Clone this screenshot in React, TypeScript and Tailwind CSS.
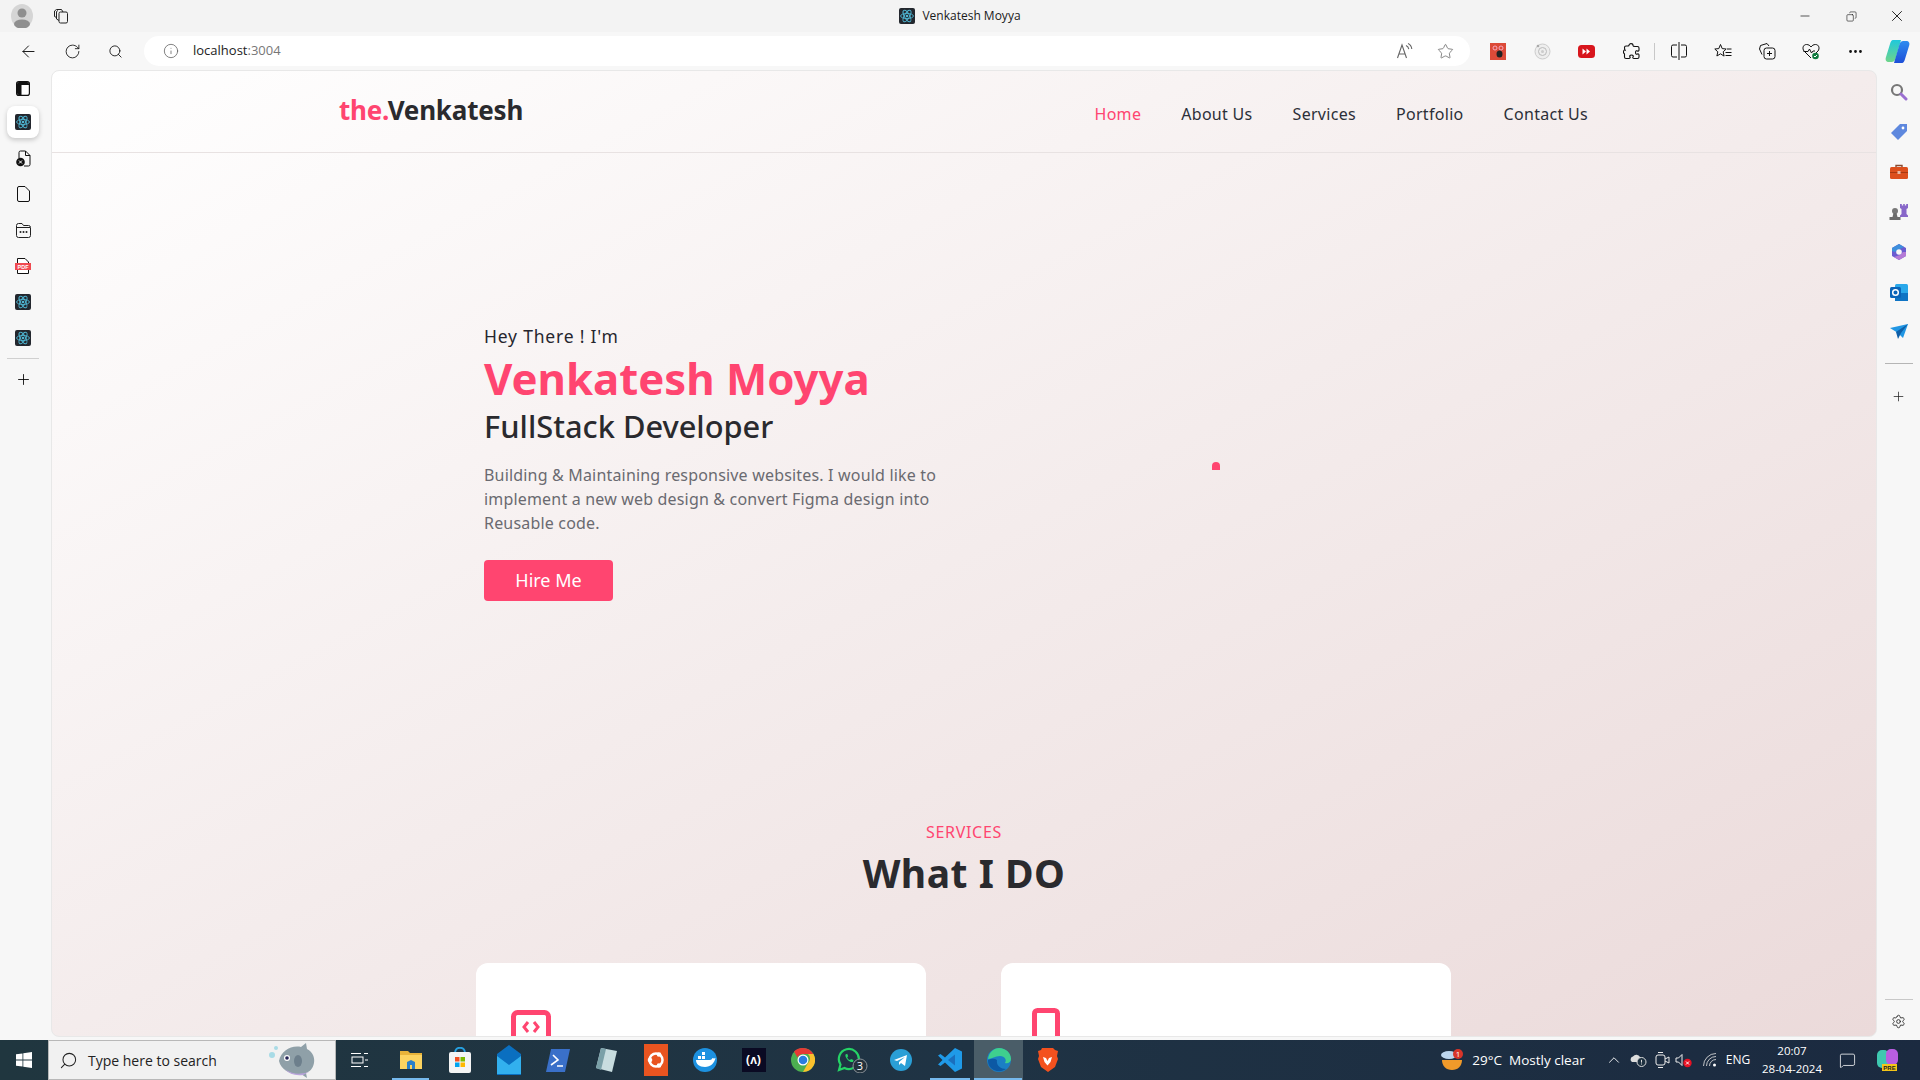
import React from "react";
import { ArrowLeft, RotateCw, Search, Info, Star, Ellipsis, Minus, X, Plus, Settings, ChevronUp, MessageSquare, Copy } from "lucide-react";

const ReactIco = () => (
  <svg width="16" height="16" viewBox="0 0 16 16">
    <rect width="16" height="16" rx="2" fill="#23272e" />
    <g fill="none" stroke="#4fb6d3" strokeWidth="0.9">
      <ellipse cx="8" cy="8" rx="6.4" ry="2.6" />
      <ellipse cx="8" cy="8" rx="6.4" ry="2.6" transform="rotate(60 8 8)" />
      <ellipse cx="8" cy="8" rx="6.4" ry="2.6" transform="rotate(120 8 8)" />
    </g>
    <circle cx="8" cy="8" r="1.3" fill="#4fb6d3" />
  </svg>
);

const LeftItem = ({ children }: { children: React.ReactNode }) => (
  <div className="w-8 h-9 flex items-center justify-center">{children}</div>
);

const LeftSidebar = () => (
  <div className="w-[51px] shrink-0 flex flex-col items-center pr-[5px]">
    <div className="h-9 flex items-center">
      <svg width="14" height="15" viewBox="0 0 14 15"><rect x="0.6" y="0.6" width="12.8" height="13.8" rx="2.2" fill="#fff" stroke="#111" strokeWidth="1.2" /><path d="M1 3a2 2 0 0 1 2-2h8a2 2 0 0 1 2 2v1H5.500v10H3a2 2 0 0 1-2-2z" fill="#111" /></svg>
    </div>
    <div className="w-8 h-8 mb-0.5 flex items-center justify-center bg-white rounded-lg shadow-[0_2px_5px_rgba(0,0,0,0.2)]"><ReactIco /></div>
    <LeftItem>
      <svg width="15" height="17" viewBox="0 0 15 17" fill="none"><path d="M3 8V2.500A1.500 1.500 0 0 1 4.500 1H9.500L14 5.500V14.500A1.500 1.500 0 0 1 12.500 16H8" stroke="#111" /><path d="M9.500 1v4.500H14" stroke="#111" /><circle cx="4.500" cy="12" r="4.300" fill="#111" /><path d="M3 10.500l3 3M6 10.500l-3 3" stroke="#fff" /></svg>
    </LeftItem>
    <LeftItem>
      <svg width="13" height="16" viewBox="0 0 13 16" fill="none" stroke="#111"><path d="M2 .5H8L12.500 5v9a1.500 1.500 0 0 1-1.500 1.500H2A1.500 1.500 0 0 1 .500 14V2A1.500 1.500 0 0 1 2 .5z" /></svg>
    </LeftItem>
    <LeftItem>
      <svg width="15" height="15" viewBox="0 0 15 15" fill="none"><path d="M.5 12.500v-10a2 2 0 0 1 2-2H6l1.500 2H12.500a2 2 0 0 1 2 2v8a2 2 0 0 1-2 2h-10a2 2 0 0 1-2-2z" stroke="#222" /><path d="M1 4.500h13" stroke="#222" /><circle cx="4.500" cy="9" r="1" fill="#222" /><circle cx="7.500" cy="9" r="1" fill="#222" /><circle cx="10.500" cy="9" r="1" fill="#222" /></svg>
    </LeftItem>
    <LeftItem>
      <svg width="16" height="16" viewBox="0 0 16 16"><path d="M2.500.5H10l3.500 3.500v11.500h-11z" fill="#fff" stroke="#111" /><rect y="5" width="16" height="7" fill="#f04a50" /><text x="8" y="10.600" fontSize="5.500" fontWeight="700" fill="#fff" textAnchor="middle" fontFamily="Liberation Sans, sans-serif">PDF</text></svg>
    </LeftItem>
    <LeftItem><ReactIco /></LeftItem>
    <LeftItem><ReactIco /></LeftItem>
    <div className="w-8 h-px bg-[#d0d0d0] mt-[2px] mb-[12px]" />
    <Plus size={17} strokeWidth={1.2} className="text-black" />
  </div>
);

const RSlot = ({ children }: { children: React.ReactNode }) => <div className="h-10 flex items-center justify-center">{children}</div>;

const RightSidebar = () => (
  <div className="w-[43px] shrink-0 flex flex-col items-center pt-[2px]">
    <RSlot>
      <svg width="18" height="18" viewBox="0 0 18 18" fill="none"><circle cx="7" cy="7" r="5" stroke="#777" strokeWidth="2.200" /><path d="M11 11l5 5" stroke="#9a6fd0" strokeWidth="3" strokeLinecap="round" /></svg>
    </RSlot>
    <RSlot>
      <svg width="18" height="18" viewBox="0 0 18 18"><path d="M1 10L10 1h7v7l-9 9z" fill="#5e88de" /><circle cx="13" cy="5" r="1.400" fill="#fff" /></svg>
    </RSlot>
    <RSlot>
      <svg width="18" height="16" viewBox="0 0 18 16"><path d="M6 3V1.500h6V3" fill="none" stroke="#8a4a30" strokeWidth="1.400" /><rect y="3" width="18" height="12" rx="1.500" fill="#dc4f1c" /><rect y="8" width="18" height="1" fill="#a8380f" /><rect x="7.500" y="7" width="3" height="3" fill="#e7b9a5" /></svg>
    </RSlot>
    <RSlot>
      <svg width="19" height="18" viewBox="0 0 19 18"><circle cx="6" cy="8" r="3" fill="#777" /><path d="M4.500 10h3l1 4H3.500zM.5 14h11v3H.5z" fill="#6b6b6b" /><path d="M11 1h1.800v1.500h1.400V1h1.600v1.500h1.400V1H19v4l-1.500 1v5l1.500 1.500V14h-8v-1.500L12.500 11V6L11 5z" fill="#8867c9" /></svg>
    </RSlot>
    <RSlot>
      <svg width="18" height="18" viewBox="0 0 18 18" fill="none"><path d="M9 1l7 4v8l-7 4-7-4V5z" fill="#6a5bd0" /><path d="M2 5l7-4 5 3-6 3-3 2-3-1z" fill="#3e8fdc" /><path d="M16 9v4l-7 4-5-3 6-2 3-3z" fill="#b47ad6" /><circle cx="9" cy="9" r="2.800" fill="#f7f7f7" /></svg>
    </RSlot>
    <RSlot>
      <svg width="18" height="17" viewBox="0 0 18 17"><rect x="5" width="13" height="17" rx="1.500" fill="#29a8ea" /><rect x="5" y="9" width="13" height="8" fill="#0f74c4" /><rect y="3" width="11" height="11" rx="1.500" fill="#0a64b8" /><circle cx="5.500" cy="8.500" r="2.800" fill="none" stroke="#fff" strokeWidth="1.500" /></svg>
    </RSlot>
    <RSlot>
      <svg width="18" height="16" viewBox="0 0 18 16"><path d="M0 4l18-4-5 14-5-5z" fill="#2196e3" /><path d="M6 8l12-8-7 9-3 6z" fill="#0e5fa8" /></svg>
    </RSlot>
    <div className="w-7 h-px bg-[#b5b5b5] mt-[11px] mb-[25px]" />
    <Plus size={15} strokeWidth={1.2} className="text-[#222]" />
    <div className="flex-1" />
    <div className="w-7 h-px bg-[#c8c8c8] mb-[14px]" />
    <Settings size={15} strokeWidth={1.5} className="text-[#333] mb-[11px]" />
  </div>
);

const TitleBar = () => (
  <div className="h-8 bg-[#f3f3f3] flex items-center shrink-0">
    <div className="w-[44px] flex justify-center">
      <svg width="22" height="24" viewBox="0 0 22 24"><ellipse cx="11" cy="12" rx="11" ry="12" fill="#d5d5d5" /><circle cx="11" cy="9" r="4.500" fill="#8f8f8f" /><ellipse cx="11" cy="20" rx="8" ry="4.500" fill="#8f8f8f" /></svg>
    </div>
    <div className="w-[32px] flex justify-center">
      <svg width="17" height="17" viewBox="0 0 17 17" fill="none" stroke="#222" strokeWidth="1"><rect x="7" y="4" width="8.500" height="11" rx="1.500" /><path d="M7 12.500L4.500 11V3.500L6 2.500M4.500 9.500L2.500 8.500V3L4.500 1.500h5L11 4" /></svg>
    </div>
    <div className="flex-1 flex items-center justify-center gap-[7px] pl-[62px]">
      <ReactIco />
      <span className="text-[12px] text-[#1a1a1a] font-['Open_Sans',sans-serif]">Venkatesh Moyya</span>
    </div>
    <div className="flex items-center text-[#111]">
      <div className="w-[46px] flex justify-center"><Minus size={14} strokeWidth={1.200} /></div>
      <div className="w-[46px] flex justify-center"><Copy size={11} strokeWidth={1.300} className="-scale-x-100" /></div>
      <div className="w-[46px] flex justify-center"><X size={18} strokeWidth={1.200} /></div>
    </div>
  </div>
);

const TB = ({ children, w = "w-[44px]" }: { children: React.ReactNode; w?: string }) => <div className={w + " flex justify-center items-center shrink-0"}>{children}</div>;

const ToolBar = () => (
  <div className="h-[38px] bg-[#f7f7f7] flex items-center shrink-0">
    <div className="w-[6px]" />
    <TB><ArrowLeft size={19} strokeWidth={1.200} className="text-[#111]" /></TB>
    <TB><RotateCw size={17} strokeWidth={1.200} className="text-[#111]" /></TB>
    <TB w="w-[42px]"><Search size={15} strokeWidth={1.400} className="text-[#111]" /></TB>
    <div className="h-[30px] w-[1326px] ml-[8px] bg-white rounded-full flex items-center pl-[19px] pr-[5px] font-['Open_Sans',sans-serif]">
      <Info size={16} strokeWidth={1.100} className="text-[#555]" />
      <span className="ml-[14px] text-[13px] text-[#222]">localhost<span className="text-[#777]">:3004</span></span>
      <div className="flex-1" />
      <svg width="18" height="18" viewBox="0 0 18 18" fill="none" stroke="#666" strokeWidth="1.100"><path d="M1.500 16L6 3l4.500 13M3 12h6" /><path d="M10 3.500c1.800.8 2.500 2 2.800 3.700M12 1.500c2.300 1 3.500 3 3.800 5.500" /></svg>
      <div className="w-[40px] flex justify-center ml-[11px]"><Star size={17} strokeWidth={1.100} className="text-[#666]" /></div>
    </div>
    <div className="w-[6px]" />
    <TB w="w-[44px]">
      <svg width="16" height="17" viewBox="0 0 16 17"><rect width="16" height="17" fill="#dc4a38" /><circle cx="5" cy="5" r="2" fill="none" stroke="#fbd" strokeWidth="0.800" /><circle cx="11" cy="5" r="2" fill="none" stroke="#fbd" strokeWidth="0.800" /><ellipse cx="9.500" cy="11" rx="3" ry="3.500" fill="#222" /></svg>
    </TB>
    <TB w="w-[44px]">
      <svg width="17" height="17" viewBox="0 0 17 17" fill="none"><circle cx="8.500" cy="8.500" r="7.500" fill="#eee" stroke="#ccc" /><circle cx="8.500" cy="8.500" r="4" stroke="#bbb" /><circle cx="8.500" cy="8.500" r="1.500" fill="#ccc" /><circle cx="4" cy="3" r="1.300" fill="#aaa" /></svg>
    </TB>
    <TB w="w-[45px]">
      <svg width="17" height="13" viewBox="0 0 17 13"><rect width="17" height="13" rx="3.500" fill="#d8161d" /><path d="M4.500 3.500l3.500 3-3.500 3zM8.500 3.500l3.500 3-3.500 3z" fill="#fff" /></svg>
    </TB>
    <TB w="w-[45px]">
      <svg width="17" height="18" viewBox="0 0 17 18" fill="none" stroke="#111" strokeWidth="1.100"><path d="M6 3.500C6 1 10 1 10 3.500c0 1 1 1 2 1h2.500c1 0 1.500.6 1.500 1.500v2c0 1-1 1.500-1.500 1s-2-.5-2 1.500 1.500 2 2 1.500 1.500 0 1.500 1V15c0 1-.6 1.500-1.500 1.500H11c-1 0-1.500-1-1-1.500s.5-2-1.500-2-2 1.500-1.500 2-.3 1.500-1 1.500H3c-1 0-1.500-.6-1.500-1.500v-3c0-.7-1.500-.5-1-2.500s1.500-1.500 1.500-1.500-.500-1-.500-2.500c0-1 .5-1.500 1.500-1.500H5c.7 0 1-.4 1-1z" /></svg>
    </TB>
    <div className="w-px h-[17px] bg-[#c8c8c8] mr-[2px]" />
    <TB w="w-[44px]">
      <svg width="16" height="18" viewBox="0 0 16 18" fill="none" stroke="#111" strokeWidth="1"><path d="M6 3H2A1.500 1.500 0 0 0 .5 4.500v9A1.500 1.500 0 0 0 2 15h4M10 3h4a1.500 1.500 0 0 1 1.500 1.500v9A1.500 1.500 0 0 1 14 15h-4M8 0v18" /></svg>
    </TB>
    <TB w="w-[44px]">
      <svg width="18" height="17" viewBox="0 0 18 17" fill="none" stroke="#111" strokeWidth="1"><path d="M6.500 1.500L8.200 5.600l4 .4-3 2.800.9 4.300-3.600-2.300L2.900 13l.9-4.200-3-2.800 4-.4zM13 6h4.500M11.500 9.500h6M11.500 12.500h6" /></svg>
    </TB>
    <TB w="w-[44px]">
      <svg width="18" height="18" viewBox="0 0 18 18" fill="none" stroke="#111" strokeWidth="1"><rect x="6" y="6" width="11" height="11" rx="2.500" /><path d="M11.500 9v5M9 11.500h5M4 12.500L1.500 7 2.500 3.500 9 1.500 11 4" /></svg>
    </TB>
    <TB w="w-[44px]">
      <svg width="18" height="18" viewBox="0 0 18 18"><path d="M9 16L2 9C0 6.500 1 2.500 4.500 2.500 6.500 2.500 8 3.500 9 5c1-1.500 2.500-2.500 4.500-2.500C17 2.500 18 6.500 16 9l-2 2" fill="none" stroke="#111" /><path d="M1.500 9.500H6l1.500-2.500 2 4 1.500-2h2" fill="none" stroke="#111" /><circle cx="13.500" cy="14" r="3.300" fill="#0f7b3f" /><path d="M12 14l1 1 2-2" fill="none" stroke="#fff" /></svg>
    </TB>
    <TB w="w-[44px]"><Ellipsis size={17} strokeWidth={2} className="text-[#111]" /></TB>
    <TB w="w-[40px]">
      <svg width="25" height="25" viewBox="0 0 25 25"><defs><linearGradient id="cpa" x1="0" y1="0" x2="0" y2="1"><stop offset="0" stopColor="#1fc8dc" /><stop offset="1" stopColor="#6fd58a" /></linearGradient><linearGradient id="cpb" x1="0" y1="0" x2="0" y2="1"><stop offset="0" stopColor="#2e8cf0" /><stop offset="1" stopColor="#1e4fd8" /></linearGradient></defs><path d="M8 1h8l-5 17c-.5 2-1.500 5-4 5H4C1 23 0 21 1 18L5 5c.5-2 1.500-4 3-4z" fill="url(#cpa)" /><path d="M17 24H9l5-17c.5-2 1.500-5 4-5h3c3 0 4 2 3 5l-4 13c-.5 2-1.500 4-3 4z" fill="url(#cpb)" /></svg>
    </TB>
  </div>
);

const Nav = () => (
  <div className="h-[82px] shrink-0 border-b border-[#e8e2e2] flex items-center justify-between pl-[287px] pr-[288px]">
    <div className="text-[26px] font-bold tracking-[-0.2px] text-[#2a2a2e] -mt-[3px]"><span className="text-[#ff4570]">the.</span>Venkatesh</div>
    <div className="flex items-center gap-[40px] text-[16px] text-[#2c2f38] tracking-[0.3px] mt-[5px]">
      <span className="text-[#ff4570]">Home</span>
      <span>About Us</span>
      <span>Services</span>
      <span>Portfolio</span>
      <span>Contact Us</span>
    </div>
  </div>
);

const Hero = () => (
  <div className="h-[669px] shrink-0 flex pl-[432px]">
    <div className="w-[470px] pt-[171px]">
      <div className="text-[17.500px] leading-[24px] tracking-[0.8px] text-[#26262e]">Hey There ! I'm</div>
      <div className="text-[43.700px] leading-[60px] font-bold text-[#ff4570]">Venkatesh Moyya</div>
      <div className="text-[30.800px] leading-[36px] font-medium text-[#2a2a2e]">FullStack Developer</div>
      <p className="mt-[19px] text-[16px] leading-[24px] tracking-[0.18px] text-[#6a6a70] w-[470px]">Building &amp; Maintaining responsive websites. I would like to implement a new web design &amp; convert Figma design into Reusable code.</p>
      <div className="mt-[25px] w-[129px] h-[41px] bg-[#ff4570] rounded-[4px] flex items-center justify-center text-white text-[18px]">Hire Me</div>
    </div>
    <div className="pl-[258px] pt-[309px]">
      <div className="w-2 h-2 rounded-t-full bg-[#ff4570]" />
    </div>
  </div>
);

const Services = () => (
  <div className="flex flex-col items-center">
    <div className="text-[16px] leading-[20px] tracking-[0.7px] text-[#ff4570]">SERVICES</div>
    <div className="text-[39px] leading-[52px] font-bold text-[#2a2a2e] mt-[5px] tracking-[0.5px]">What I DO</div>
    <div className="flex gap-[75px] mt-[64px] -ml-[1px]">
      <div className="w-[450px] h-[200px] bg-white rounded-[12px] pt-[47px] pl-[35px]">
        <svg width="40" height="34" viewBox="0 0 40 34" fill="none" stroke="#ff4570"><rect x="2.500" y="2.500" width="35" height="29" rx="4" strokeWidth="5" /><path d="M17 12l-4 5 4 5M23 12l4 5-4 5" strokeWidth="3" /></svg>
      </div>
      <div className="w-[450px] h-[200px] bg-white rounded-[12px] pt-[45px] pl-[31px]">
        <svg width="28" height="44" viewBox="0 0 28 44" fill="none" stroke="#ff4570"><rect x="2.500" y="2.500" width="23" height="39" rx="3" strokeWidth="5" /></svg>
      </div>
    </div>
  </div>
);

const Slot = ({ children, on }: { children: React.ReactNode; on?: boolean }) => (
  <div className={"w-[49px] h-10 flex items-center justify-center shrink-0 relative" + (on ? " bg-[#4a5d68]" : "")}>
    {children}
  </div>
);

const Taskbar = () => (
  <div className="h-10 shrink-0 bg-[linear-gradient(90deg,#20363f,#1f3344_50%,#1b2a40)] flex items-center text-white font-['Open_Sans',sans-serif]">
    <div className="w-[48px] flex justify-center">
      <svg width="16" height="16" viewBox="0 0 16 16" fill="#fff"><path d="M0 2.300l6.500-.9v6.200H0zM7.300 1.300L16 0v7.600H7.300zM0 8.400h6.500v6.200L0 13.700zM7.300 8.400H16V16l-8.700-1.200z" /></svg>
    </div>
    <div className="w-[288px] h-10 bg-[#f1f1f1] border border-[#b8b8b8] flex items-center text-[#222] pl-[10px]">
      <Search size={19} strokeWidth={1.300} className="-scale-x-100" />
      <span className="ml-[10px] text-[14px] w-[178px]">Type here to search</span>
      <svg width="56" height="38" viewBox="0 0 56 38" className="ml-[-1px]"><circle cx="7" cy="14" r="3" fill="#a8dbe6" /><circle cx="11" cy="7" r="2" fill="#a8dbe6" /><path d="M14 20C16 10 26 4 36 6l5-4 1 6c6 3 8 9 7 14-1 6-5 9-8 10l1 5-6-4c-10 1-20-4-22-13z" fill="#8fa0a8" /><path d="M20 28c6 5 14 6 24 3l-6 3c-8 1-14-1-18-6z" fill="#b9a2dc" /><circle cx="22" cy="17" r="3" fill="#fff" /><circle cx="22" cy="17" r="1.800" fill="#225" /><ellipse cx="33" cy="20" rx="4" ry="6" fill="#6d7f8c" /></svg>
    </div>
    <div className="w-[46px] flex justify-center">
      <svg width="17" height="18" viewBox="0 0 17 18" fill="none" stroke="#fff" strokeWidth="1"><path d="M0 2.500h10M0 15.500h10M13 2.500h4M13 15.500h4M14 9h3" /><rect x="1" y="6" width="11" height="6" /></svg>
    </div>
    <div className="w-[4px]" />
    <Slot>
      <svg width="22" height="20" viewBox="0 0 22 20"><path d="M0 1h8l2 2h12v15H0z" fill="#e8b33a" /><path d="M0 5h22v14H0z" fill="#fcd360" /><path d="M7 19v-7l4-2 4 2v7h-3v-4h-2v4z" fill="#2a7fc8" /></svg>
      <div className="absolute bottom-0 left-[6px] w-[37px] h-[2px] bg-[#76b9ed]" />
    </Slot>
    <Slot>
      <svg width="22" height="26" viewBox="0 0 22 26"><path d="M6 6c0-7 10-7 10 0" fill="none" stroke="#26a0e0" strokeWidth="2" /><rect y="5" width="22" height="21" rx="2" fill="#f4f4f4" /><rect x="6" y="10" width="4.500" height="4.500" fill="#f25022" /><rect x="11.500" y="10" width="4.500" height="4.500" fill="#7fba00" /><rect x="6" y="15.500" width="4.500" height="4.500" fill="#00a4ef" /><rect x="11.500" y="15.500" width="4.500" height="4.500" fill="#ffb900" /></svg>
    </Slot>
    <Slot>
      <svg width="24" height="30" viewBox="0 0 24 30"><path d="M12 0l12 9v21H0V9z" fill="#0a6fc0" /><path d="M0 11l12 9 12-9v18H0z" fill="#32b0ee" /></svg>
    </Slot>
    <Slot>
      <svg width="24" height="24" viewBox="0 0 24 24"><path d="M5 1h19l-5 23H0z" fill="#3a70c9" /><path d="M7 7l5 5-7 5M11 18h6" fill="none" stroke="#fff" strokeWidth="1.600" /></svg>
    </Slot>
    <Slot>
      <svg width="23" height="26" viewBox="0 0 23 26"><path d="M6 1l16 3-5 21-16-4z" fill="#c8dde0" /><path d="M6 1l5 1-5 21-5-2z" fill="#7aa0a8" /></svg>
    </Slot>
    <Slot>
      <svg width="24" height="32" viewBox="0 0 24 32"><rect width="24" height="32" fill="#e95420" /><circle cx="12" cy="16" r="6.500" fill="none" stroke="#fff" strokeWidth="2.500" /><circle cx="6" cy="16" r="2.300" fill="#fff" /><circle cx="15" cy="10.500" r="2.300" fill="#fff" /><circle cx="15" cy="21.500" r="2.300" fill="#fff" /></svg>
    </Slot>
    <Slot>
      <svg width="24" height="24" viewBox="0 0 24 24"><circle cx="12" cy="12" r="12" fill="#1d91e0" /><path d="M3 12h14c1 0 2-1 2.500-2 1 .5 2 .5 3 0-1 5-5 9-10.500 9C6 19 3 16 3 12z" fill="#fff" /><rect x="5" y="8" width="3" height="3" fill="#fff" /><rect x="9" y="8" width="3" height="3" fill="#fff" /><rect x="9" y="4" width="3" height="3" fill="#fff" /></svg>
    </Slot>
    <Slot>
      <div className="w-6 h-6 bg-[#0a0a23] flex items-center justify-center text-[12px] font-bold leading-none">(ʌ)</div>
    </Slot>
    <Slot>
      <svg width="24" height="24" viewBox="0 0 24 24"><circle cx="12" cy="12" r="12" fill="#4caf50" /><path d="M12 0a12 12 0 0 1 10.400 6H12a6 6 0 0 0-5.500 3.500L3 3.600A12 12 0 0 1 12 0z" fill="#e53935" /><path d="M22.400 6A12 12 0 0 1 12 24l5-9a6 6 0 0 0 0-9z" fill="#fbc02d" /><circle cx="12" cy="12" r="5.500" fill="#fff" /><circle cx="12" cy="12" r="4.300" fill="#2a7de1" /></svg>
    </Slot>
    <Slot>
      <svg width="32" height="26" viewBox="0 0 32 26" fill="none"><path d="M3 23l1.500-5.500A10 10 0 1 1 8.500 21z" stroke="#25d366" strokeWidth="2.200" /><path d="M9.500 7.500c-1 3 4 8.500 7.500 7.500l.5-2-2.500-1-1 1c-1 0-2.500-1.500-2.800-2.800l1-1-1-2.500z" fill="#25d366" /><circle cx="24" cy="19" r="7" fill="#24323c" stroke="#8a9298" /><text x="24" y="23" fontSize="11" fill="#fff" textAnchor="middle" fontFamily="Open Sans, sans-serif">3</text></svg>
    </Slot>
    <Slot>
      <svg width="22" height="22" viewBox="0 0 22 22"><circle cx="11" cy="11" r="11" fill="#2a9fd6" /><path d="M4 11l13-5-2 11-4-3-2 2v-3l6-5-8 4z" fill="#fff" /></svg>
    </Slot>
    <Slot>
      <svg width="24" height="24" viewBox="0 0 24 24"><path d="M17 0l7 3.500v17L17 24 7 14.500 2.500 18 0 16.500 4.500 12 0 7.500 2.500 6 7 9.500z" fill="#1f9ae8" /><path d="M17 6.500L10 12l7 5.500z" fill="#1a6fbe" /></svg>
      <div className="absolute bottom-0 left-[5px] w-[40px] h-[2px] bg-[#76b9ed]" />
    </Slot>
    <Slot on>
      <svg width="24" height="24" viewBox="0 0 24 24"><circle cx="12" cy="12" r="12" fill="#1b7fc4" /><path d="M1 11C2 4 7 0 12 0c7 0 12 5 12 11 0 3-3 5-6 4 2-3 0-7-5-7-5 0-8 3-12 3z" fill="#3fcf8e" /><path d="M10 12c-1 5 3 9 9 9-3 2.500-11 4-16-2-2-2.500-2-5-2-7 3-1 6-2 9 0z" fill="#0c59a4" /></svg>
      <div className="absolute bottom-0 left-0 w-[48px] h-[2px] bg-[#76b9ed]" />
    </Slot>
    <Slot>
      <svg width="21" height="24" viewBox="0 0 21 24"><path d="M5 0h11l2 2 3 1-1 5 1 3-3 8-7 5-7-5-3-8 1-3-1-5 3-1z" fill="#f4511e" /><path d="M6 9l3 1 1.500 3 1.500-3 3-1-1.500 5-3 3.500-3-3.500z" fill="#fff" /></svg>
    </Slot>
    <div className="flex-1" />
    <svg width="24" height="24" viewBox="0 0 24 24" className="mr-[8px]"><path d="M2 12h20c0 6-4 10-10 10S2 18 2 12z" fill="#f09a2a" /><ellipse cx="9" cy="7" rx="8" ry="4" fill="#bcd6ee" /><circle cx="18" cy="6" r="5" fill="#d8352a" /><text x="18" y="9" fontSize="8" fill="#fff" textAnchor="middle" fontFamily="Open Sans, sans-serif">1</text></svg>
    <span className="text-[13.500px] mr-[7px]">29°C</span>
    <span className="text-[13.500px] w-[93px]">Mostly clear</span>
    <div className="w-[24px] flex justify-center"><ChevronUp size={18} strokeWidth={1.200} /></div>
    <div className="w-[24px] flex justify-center">
      <svg width="17" height="14" viewBox="0 0 17 14"><path d="M2 9a3 3 0 0 1 1-5.500A4 4 0 0 1 10 4a3 3 0 0 1 1 1v4z" fill="#ddd" /><circle cx="11.500" cy="9" r="4.500" fill="#1d3040" stroke="#ddd" /><path d="M11.500 6.800v2.800M11.500 10.500v1" stroke="#ddd" /></svg>
    </div>
    <div className="w-[24px] flex justify-center">
      <svg width="15" height="18" viewBox="0 0 15 18" fill="none" stroke="#eee" strokeWidth="1"><rect x="1" y="4" width="9" height="10" rx="2" /><path d="M10 8l4-2v6l-4-2M3 1.500h5M3 16.500h5" /></svg>
    </div>
    <div className="w-[24px] flex justify-center -translate-x-[2px]">
      <svg width="18" height="15" viewBox="0 0 18 15"><path d="M1 5h2.500L7 1.500v11L3.500 9H1z" fill="none" stroke="#eee" /><circle cx="12.500" cy="10" r="4.200" fill="#e81123" /><path d="M11 8.500l3 3M14 8.500l-3 3" stroke="#fff" /></svg>
    </div>
    <div className="w-[24px] flex justify-center">
      <svg width="14" height="14" viewBox="0 0 14 14" fill="none" stroke="#ddd"><path d="M.5 13A12.500 12.500 0 0 1 13 .5M3.500 13A9.500 9.500 0 0 1 13 3.500M6.500 13A6.500 6.500 0 0 1 13 6.500" opacity="0.85" /><circle cx="11.500" cy="12" r="1.500" fill="#fff" stroke="none" /></svg>
    </div>
    <div className="w-[32px] text-center text-[12px]">ENG</div>
    <div className="w-[72px] ml-[2px] text-center text-[11.500px] leading-[18px]"><div>20:07</div><div>28-04-2024</div></div>
    <div className="w-[38px] flex justify-center"><MessageSquare size={17} strokeWidth={1.100} /></div>
    <div className="w-[42px] flex justify-center">
      <svg width="21" height="24" viewBox="0 0 21 24"><rect y="2" width="12" height="18" rx="5" fill="#3ec8b0" /><rect x="9" y="1" width="12" height="16" rx="5" fill="#b85ee0" /><rect x="5" y="16" width="15" height="7" fill="#f5c518" /><text x="12.500" y="22" fontSize="6" fontWeight="700" fill="#222" textAnchor="middle" fontFamily="Liberation Sans, sans-serif">PRE</text></svg>
    </div>
    <div className="w-[12px]" />
  </div>
);

export default function App() {
  return (
    <div className="w-[1920px] h-[1080px] overflow-hidden flex flex-col bg-[#f7f7f7] font-['Noto_Sans',sans-serif]">
      <TitleBar />
      <ToolBar />
      <div className="flex-1 min-h-0 flex">
        <LeftSidebar />
        <div className="flex-1 min-w-0 mb-[3px] rounded-[8px] border border-[#e8e8e8] overflow-hidden bg-[linear-gradient(to_bottom_right,#ffffff,#f4ecec_50%,#ebdada)] flex flex-col">
          <Nav />
          <Hero />
          <Services />
        </div>
        <RightSidebar />
      </div>
      <Taskbar />
    </div>
  );
}
